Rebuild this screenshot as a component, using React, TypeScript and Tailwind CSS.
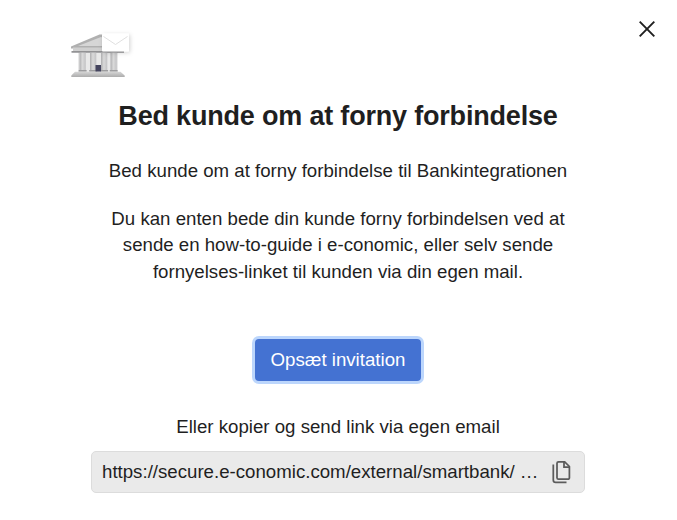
import React from "react";

const SHARE_LINK = "https://secure.e-conomic.com/external/smartbank/ …";

function BankIllustration() {
  return (
    <svg width="72" height="60" viewBox="0 0 72 60" aria-hidden="true">
      <defs>
        <linearGradient id="column" x1="0" x2="1">
          <stop offset="0" stopColor="#adadaf" />
          <stop offset="0.45" stopColor="#dadada" />
          <stop offset="1" stopColor="#c2c2c4" />
        </linearGradient>
        <linearGradient id="base" x1="0" x2="0" y1="0" y2="1">
          <stop offset="0" stopColor="#d6d6d6" />
          <stop offset="1" stopColor="#acacac" />
        </linearGradient>
        <filter id="shadow" x="-30%" y="-30%" width="160%" height="180%">
          <feDropShadow dx="1" dy="1.2" stdDeviation="2" floodColor="#000" floodOpacity="0.18" />
        </filter>
      </defs>
      <rect x="13" y="26" width="40" height="21" fill="#e9e9e9" />
      <path d="M6 21.500 34.500 9.500h3l21.500 12v2H6z" fill="#b0b0b0" />
      <path d="M13 21 36 12l20 9z" fill="#d6d6d6" />
      <path d="M8 22.500h50v4H8z" fill="#cfcfcf" />
      <path d="M6.500 26h52.500v1.700H6.500z" fill="#929294" />
      {[14.500, 25, 36, 45.500].map((x) => (
        <g key={x}>
          <rect x={x} y="27.700" width="6.300" height="18.500" fill="url(#column)" />
          <rect x={x - 0.8} y="45" width="7.900" height="1.600" fill="#9c9c9e" />
        </g>
      ))}
      <rect x="30.500" y="40" width="5.500" height="6.700" fill="#45455f" />
      <path d="M10 46.700h45.500l4.200 3.800V52H6.300v-1.500z" fill="url(#base)" />
      <rect x="37" y="8.500" width="27" height="18" rx="1" fill="#fff" filter="url(#shadow)" />
      <path d="m38.500 11.500 12 8 12-8" fill="none" stroke="#e0e0e0" strokeWidth="1" />
    </svg>
  );
}

function CloseIcon() {
  return (
    <svg width="16" height="16" viewBox="0 0 16 16" aria-hidden="true">
      <path d="m.7.7 14.600 14.600M15.300.7.7 15.300" stroke="#1f1f1f" strokeWidth="1.900" />
    </svg>
  );
}

function CopyIcon() {
  return (
    <svg width="20" height="24" viewBox="0 0 20 24" fill="none" stroke="#5c5c5c" strokeWidth="1.750" aria-hidden="true">
      <path d="M6.500 1.800h6.200l4.700 4.700v11.200a1.500 1.500 0 0 1-1.500 1.500H6.500a1.500 1.500 0 0 1-1.500-1.500V3.300a1.500 1.500 0 0 1 1.500-1.500z" />
      <path d="M12 1.800v5.400h5.400" />
      <path d="M1.300 4.500v15.500a2.400 2.400 0 0 0 2.400 2.400h10.800" />
    </svg>
  );
}

export default function App() {
  return (
    <div className="flex h-[520px] w-[677px] flex-col bg-white font-['Liberation_Sans',Arial,sans-serif] text-[18.660px] leading-[26.600px] text-[#1f1f1f]">
      <header className="flex h-[88px] items-start justify-between pt-[21px] pr-[22px] pl-[65px]">
        <div className="pt-1">
          <BankIllustration />
        </div>
        <button type="button" aria-label="Luk">
          <CloseIcon />
        </button>
      </header>

      <main className="ml-[91px] flex w-[494px] flex-col items-center text-center">
        <h1 className="mt-3 text-[27px] leading-8 font-bold tracking-[-0.190px] whitespace-nowrap">
          Bed kunde om at forny forbindelse
        </h1>
        <p className="mt-[26px] whitespace-nowrap">
          Bed kunde om at forny forbindelse til Bankintegrationen
        </p>
        <p className="mt-[21px] whitespace-nowrap">
          Du kan enten bede din kunde forny forbindelsen ved at
          <br />
          sende en how-to-guide i e-conomic, eller selv sende
          <br />
          fornyelses-linket til kunden via din egen mail.
        </p>
        <button
          type="button"
          className="mt-[54px] h-[42px] w-[166px] rounded-[4px] bg-[#4472d2] whitespace-nowrap text-white ring-3 ring-[#bcd6fc]"
        >
          Opsæt invitation
        </button>
        <p className="mt-[33px] whitespace-nowrap">Eller kopier og send link via egen email</p>
        <div className="mt-2.5 flex h-[42px] w-full items-center justify-between rounded-[5px] border border-[#dcdcdc] bg-[#eaeaea] pr-3 pl-2.5">
          <span className="whitespace-nowrap">{SHARE_LINK}</span>
          <button type="button" aria-label="Kopier link">
            <CopyIcon />
          </button>
        </div>
      </main>
    </div>
  );
}
